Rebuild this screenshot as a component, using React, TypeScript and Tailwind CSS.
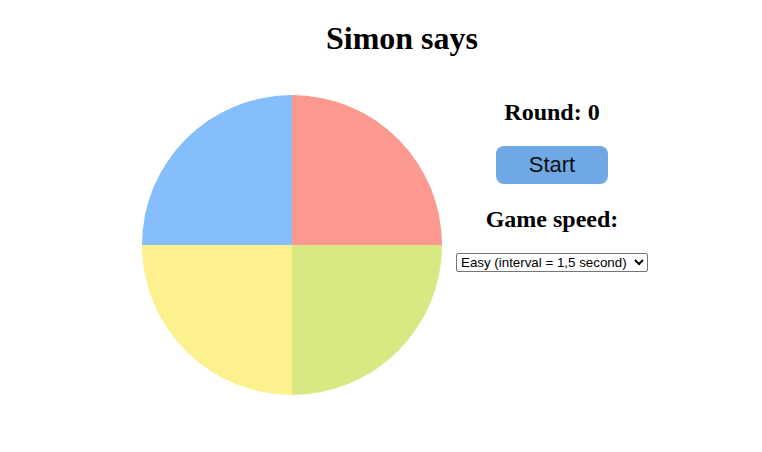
import React from "react";

const serif = { fontFamily: '"Liberation Serif", "Times New Roman", serif' };

export default function App() {
  const [round] = React.useState(0);

  return (
    <div className="w-[762px] h-[452px] bg-white text-black overflow-hidden">
      <h1
        className="pt-[20px] pl-[42px] text-center text-[32px] leading-[36px] font-bold"
        style={serif}
      >
        Simon says
      </h1>

      <div className="flex mt-[39px] ml-[142px] gap-[10px]">
        {/* game board */}
        <div className="grid grid-cols-2 w-[300px] h-[300px]">
          <div className="bg-[#85bdfd] rounded-tl-[150px]" />
          <div className="bg-[#fb998e] rounded-tr-[150px]" />
          <div className="bg-[#fdf18e] rounded-bl-[150px]" />
          <div className="bg-[#d8e984] rounded-br-[150px]" />
        </div>

        {/* controls */}
        <div className="w-[200px] flex flex-col items-center">
          <h2 className="mt-[3px] text-[24px] leading-[28px] font-bold" style={serif}>
            Round: {round}
          </h2>
          <button
            type="button"
            className="mt-[20px] w-[112px] h-[38px] pb-[2px] rounded-[8px] bg-[#6fa8e4] text-[22px] text-[#111]"
            style={{ fontFamily: '"Liberation Sans", Arial, sans-serif' }}
          >
            Start
          </button>
          <h2 className="mt-[21px] text-[24px] leading-[28px] font-bold" style={serif}>
            Game speed:
          </h2>
          <select
            className="mt-[20px] h-[19px] w-[192px] border border-[#767676] rounded-[2px] bg-white text-[13.33px] text-black"
            style={{ fontFamily: '"Liberation Sans", Arial, sans-serif' }}
            defaultValue="easy"
          >
            <option value="easy">Easy (interval = 1,5 second)</option>
            <option value="medium">Medium (interval = 1 second)</option>
            <option value="hard">Hard (interval = 0,5 second)</option>
          </select>
        </div>
      </div>
    </div>
  );
}
